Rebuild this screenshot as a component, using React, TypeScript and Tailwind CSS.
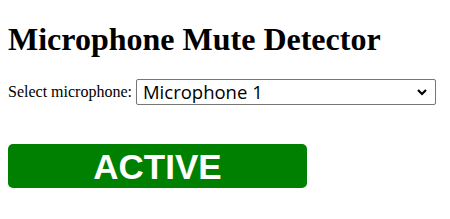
import React from "react";

export default function App() {
  return (
    <div className="px-2 pt-[21px] bg-white min-h-[219px]">
      <h1 className="m-0 text-[32px] font-bold leading-[37px] text-black [font-family:'Liberation_Serif',serif]">
        Microphone Mute Detector
      </h1>
      <div className="mt-[21px] flex items-center h-[26px]">
        <label className="text-[16px] text-black [font-family:'Liberation_Serif',serif] mr-[4px]">
          Select microphone:
        </label>
        <div className="w-[300px] h-[26px] border border-[#767676] rounded-[2px] flex items-center justify-between pl-[6px] pr-[6px] bg-white">
          <span className="text-[18.5px] leading-none text-black [font-family:'Open_Sans',sans-serif]">Microphone 1</span>
          <svg width="12" height="8" viewBox="0 0 12 8" className="mr-[1px]">
            <path d="M2 2 L6 6 L10 2" fill="none" stroke="#000" strokeWidth="2.2" />
          </svg>
        </div>
      </div>
      <div className="mt-[39px] w-[299px] h-[44px] rounded-[5px] bg-[#008000] flex items-center justify-center">
        <span className="text-[35px] font-bold text-white leading-none [font-family:'Liberation_Sans',sans-serif]">ACTIVE</span>
      </div>
    </div>
  );
}
